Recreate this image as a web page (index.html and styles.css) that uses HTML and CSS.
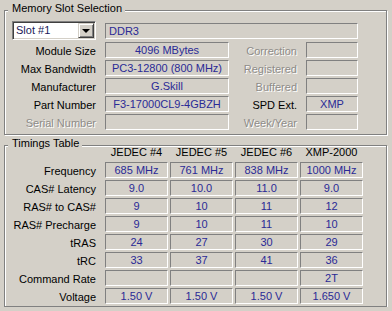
FILE: index.html
```html
<!DOCTYPE html>
<html lang="en">
<head>
  <meta charset="UTF-8" />
  <title>SPD</title>
  <link rel="stylesheet" href="styles.css">
</head>
<body>

  <div class="panel">

    <!-- Memory Slot Selection -->
    <section class="group slot-group">
      <span class="legend">Memory Slot Selection</span>
      <div class="slot-grid">
        <div class="slot-select">
          <span class="slot-text">Slot #1</span>
          <span class="drop-btn"><span class="arrow"></span></span>
        </div>
        <div class="field field-left wide">DDR3</div>

        <div class="label">Module Size</div>
        <div class="field">4096 MBytes</div>
        <div class="label disabled">Correction</div>
        <div class="field"></div>

        <div class="label">Max Bandwidth</div>
        <div class="field">PC3-12800 (800 MHz)</div>
        <div class="label disabled">Registered</div>
        <div class="field"></div>

        <div class="label">Manufacturer</div>
        <div class="field">G.Skill</div>
        <div class="label disabled">Buffered</div>
        <div class="field"></div>

        <div class="label">Part Number</div>
        <div class="field">F3-17000CL9-4GBZH</div>
        <div class="label">SPD Ext.</div>
        <div class="field">XMP</div>

        <div class="label disabled">Serial Number</div>
        <div class="field"></div>
        <div class="label disabled">Week/Year</div>
        <div class="field"></div>
      </div>
    </section>

    <!-- Timings Table -->
    <section class="group timings-group">
      <span class="legend">Timings Table</span>
      <div class="timings-grid">
        <div></div>
        <div class="col-head">JEDEC #4</div>
        <div class="col-head">JEDEC #5</div>
        <div class="col-head">JEDEC #6</div>
        <div class="col-head">XMP-2000</div>

        <div class="label">Frequency</div>
        <div class="field">685 MHz</div>
        <div class="field">761 MHz</div>
        <div class="field">838 MHz</div>
        <div class="field">1000 MHz</div>

        <div class="label">CAS# Latency</div>
        <div class="field">9.0</div>
        <div class="field">10.0</div>
        <div class="field">11.0</div>
        <div class="field">9.0</div>

        <div class="label">RAS# to CAS#</div>
        <div class="field">9</div>
        <div class="field">10</div>
        <div class="field">11</div>
        <div class="field">12</div>

        <div class="label">RAS# Precharge</div>
        <div class="field">9</div>
        <div class="field">10</div>
        <div class="field">11</div>
        <div class="field">10</div>

        <div class="label">tRAS</div>
        <div class="field">24</div>
        <div class="field">27</div>
        <div class="field">30</div>
        <div class="field">29</div>

        <div class="label">tRC</div>
        <div class="field">33</div>
        <div class="field">37</div>
        <div class="field">41</div>
        <div class="field">36</div>

        <div class="label">Command Rate</div>
        <div class="field"></div>
        <div class="field"></div>
        <div class="field"></div>
        <div class="field">2T</div>

        <div class="label">Voltage</div>
        <div class="field">1.50 V</div>
        <div class="field">1.50 V</div>
        <div class="field">1.50 V</div>
        <div class="field">1.650 V</div>
      </div>
    </section>

  </div>

</body>
</html>
```

FILE: styles.css
```css
/* Reset & Base */
* {
  box-sizing: border-box;
  margin: 0;
  padding: 0;
}

body {
  font-family: 'Liberation Sans', Arial, sans-serif;
  font-size: 11px;
  background-color: #d4d0c8;
  color: #000;
  overflow: hidden;
}

.panel {
  padding: 10px 0 0 4px;
}

/* Group boxes (etched frame) */
.group {
  position: relative;
  width: 383px;
  border: 1px solid #808080;
  box-shadow: inset 1px 1px 0 #fff, 1px 1px 0 #fff;
}

.legend {
  position: absolute;
  top: -9px;
  left: 3px;
  padding: 0 3px 0 4px;
  line-height: 13px;
  background-color: #d4d0c8;
}

.slot-group {
  padding: 10px 0 4px 7px;
}

.timings-group {
  margin-top: 10px;
  padding: 0 0 2px 0;
}

/* Slot section grid */
.slot-grid {
  display: grid;
  grid-template-columns: 84px 124px 59px 52px;
  grid-template-rows: 19px repeat(5, 16px);
  column-gap: 9px;
  row-gap: 2px;
}

.slot-select {
  display: flex;
  justify-content: space-between;
  background-color: #fff;
  border: 1px solid;
  border-color: #808080 #fff #fff #808080;
  box-shadow: inset 1px 1px 0 #404040, inset -1px -1px 0 #d4d0c8;
  padding: 1px;
}

.slot-text {
  padding-left: 2px;
  line-height: 15px;
  color: #1a1a5a;
}

.drop-btn {
  width: 16px;
  display: flex;
  align-items: center;
  justify-content: center;
  background-color: #d4d0c8;
  border: 1px solid;
  border-color: #d4d0c8 #404040 #404040 #d4d0c8;
  box-shadow: inset 1px 1px 0 #fff, inset -1px -1px 0 #808080;
}

.arrow {
  width: 0;
  height: 0;
  border-left: 4px solid transparent;
  border-right: 4px solid transparent;
  border-top: 4px solid #000;
  margin-top: 1px;
}

/* Read-only fields */
.field {
  border: 1px solid;
  border-color: #808080 #fff #fff #808080;
  color: #2a2a96;
  text-align: center;
  line-height: 14px;
  height: 16px;
  white-space: nowrap;
  overflow: hidden;
}

.field-left {
  text-align: left;
  padding-left: 3px;
  align-self: center;
}

.wide {
  grid-column: 2 / 5;
}

.label {
  text-align: right;
  line-height: 16px;
  padding-top: 1px;
  white-space: nowrap;
}

.label.disabled {
  color: #8e8c88;
  text-shadow: 1px 1px 0 #fff;
}

/* Timings grid */
.timings-grid {
  display: grid;
  grid-template-columns: 98px repeat(4, 63px);
  grid-template-rows: 14px repeat(8, 16px);
  column-gap: 2px;
  row-gap: 2px;
}

.timings-grid .label {
  padding-right: 7px;
}

.col-head {
  text-align: center;
  line-height: 13px;
  white-space: nowrap;
}
```
